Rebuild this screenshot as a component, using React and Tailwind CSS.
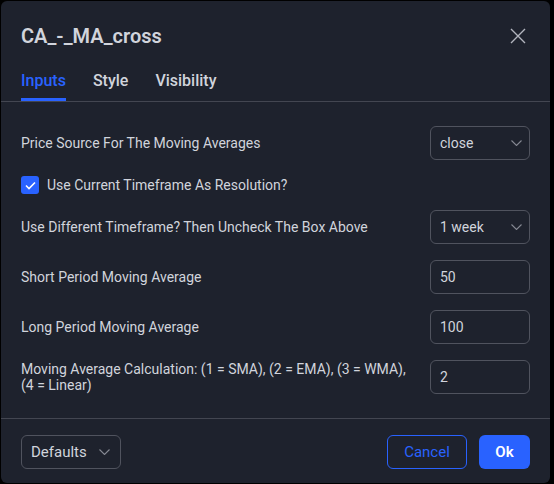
import React, { useState } from "react";

const Chevron = () => (
  <svg width="11" height="6" viewBox="0 0 11 6" fill="none" className="shrink-0">
    <path d="M0.5 0.5l5 5 5-5" stroke="#868993" strokeWidth="1.1" />
  </svg>
);

const SelectBox = ({ value }) => (
  <div className="flex h-[34px] w-[100px] items-center justify-between rounded-md border border-[#50535e] pl-[9px] pr-[7px] text-[14px] text-[#d1d4dc]">
    <span>{value}</span>
    <Chevron />
  </div>
);

const NumberBox = ({ value }) => (
  <div className="flex h-[34px] w-[100px] items-center rounded-md border border-[#50535e] px-[9px] text-[14px] text-[#d1d4dc]">
    {value}
  </div>
);

const Row = ({ label, children }) => (
  <div className="flex min-h-[34px] items-center justify-between gap-5">
    <div className="text-[14px] leading-4 text-[#d1d4dc]">{label}</div>
    {children}
  </div>
);

const App = () => {
  const [checked, setChecked] = useState(true);
  const tabs = ["Inputs", "Style", "Visibility"];

  return (
    <div
      className="h-[484px] w-[554px] overflow-hidden bg-black pl-px pt-px"
      style={{ fontFamily: "Roboto, 'Liberation Sans', sans-serif" }}
    >
      <div className="flex h-[482px] w-[549px] flex-col rounded-md bg-[#1e222d]">
        {/* header */}
        <div className="flex h-[70px] shrink-0 items-center justify-between pl-5 pr-[24px]">
          <h1 className="text-[20px] font-semibold text-[#d1d4dc]">CA_-_MA_cross</h1>
          <svg width="16" height="16" viewBox="0 0 16 16" fill="none">
            <path d="M1 1l14 14M15 1L1 15" stroke="#b2b5be" strokeWidth="1.4" />
          </svg>
        </div>

        {/* tabs */}
        <div className="flex h-[31px] shrink-0 gap-[27px] border-b border-[#434651] px-5">
          {tabs.map((t, i) => (
            <div key={t} className="flex h-full flex-col justify-between">
              <span
                className={
                  "text-[16px] font-medium leading-[19px] " +
                  (i === 0 ? "text-[#2962ff]" : "text-[#d1d4dc]")
                }
              >
                {t}
              </span>
              <div className={i === 0 ? "h-[3px] bg-[#2962ff]" : "h-[3px]"} />
            </div>
          ))}
        </div>

        {/* inputs */}
        <div className="flex flex-col gap-4 border-b border-[#434651] px-5 pb-6 pt-6">
          <Row label="Price Source For The Moving Averages">
            <SelectBox value="close" />
          </Row>
          <label className="flex h-[18px] items-center gap-2 text-[14px] text-[#d1d4dc]">
            <button
              onClick={() => setChecked(!checked)}
              className={
                "flex h-[18px] w-[18px] items-center justify-center rounded-[3px] " +
                (checked ? "bg-[#2962ff]" : "border border-[#50535e]")
              }
            >
              {checked && (
                <svg width="11" height="9" viewBox="0 0 11 9" fill="none">
                  <path d="M1 4.5l3 3 6-6" stroke="#fff" strokeWidth="1.6" />
                </svg>
              )}
            </button>
            Use Current Timeframe As Resolution?
          </label>
          <Row label="Use Different Timeframe? Then Uncheck The Box Above">
            <SelectBox value="1 week" />
          </Row>
          <Row label="Short Period Moving Average">
            <NumberBox value="50" />
          </Row>
          <Row label="Long Period Moving Average">
            <NumberBox value="100" />
          </Row>
          <Row
            label={
              <>
                Moving Average Calculation: (1 = SMA), (2 = EMA), (3 = WMA),
                <br />
                (4 = Linear)
              </>
            }
          >
            <NumberBox value="2" />
          </Row>
        </div>

        {/* footer */}
        <div className="flex items-center justify-between px-5 pt-4">
          <div className="flex h-[34px] w-[100px] items-center justify-between rounded-md border border-[#50535e] pl-[9px] pr-[10px] text-[15px] text-[#d1d4dc]">
            <span>Defaults</span>
            <Chevron />
          </div>
          <div className="flex gap-3">
            <button className="h-[34px] w-[80px] rounded-md border border-[#2962ff] text-[15px] text-[#2962ff]">
              Cancel
            </button>
            <button className="h-[34px] w-[51px] rounded-md bg-[#2962ff] text-[15px] font-semibold text-white">
              Ok
            </button>
          </div>
        </div>
      </div>
    </div>
  );
};

export default App;
